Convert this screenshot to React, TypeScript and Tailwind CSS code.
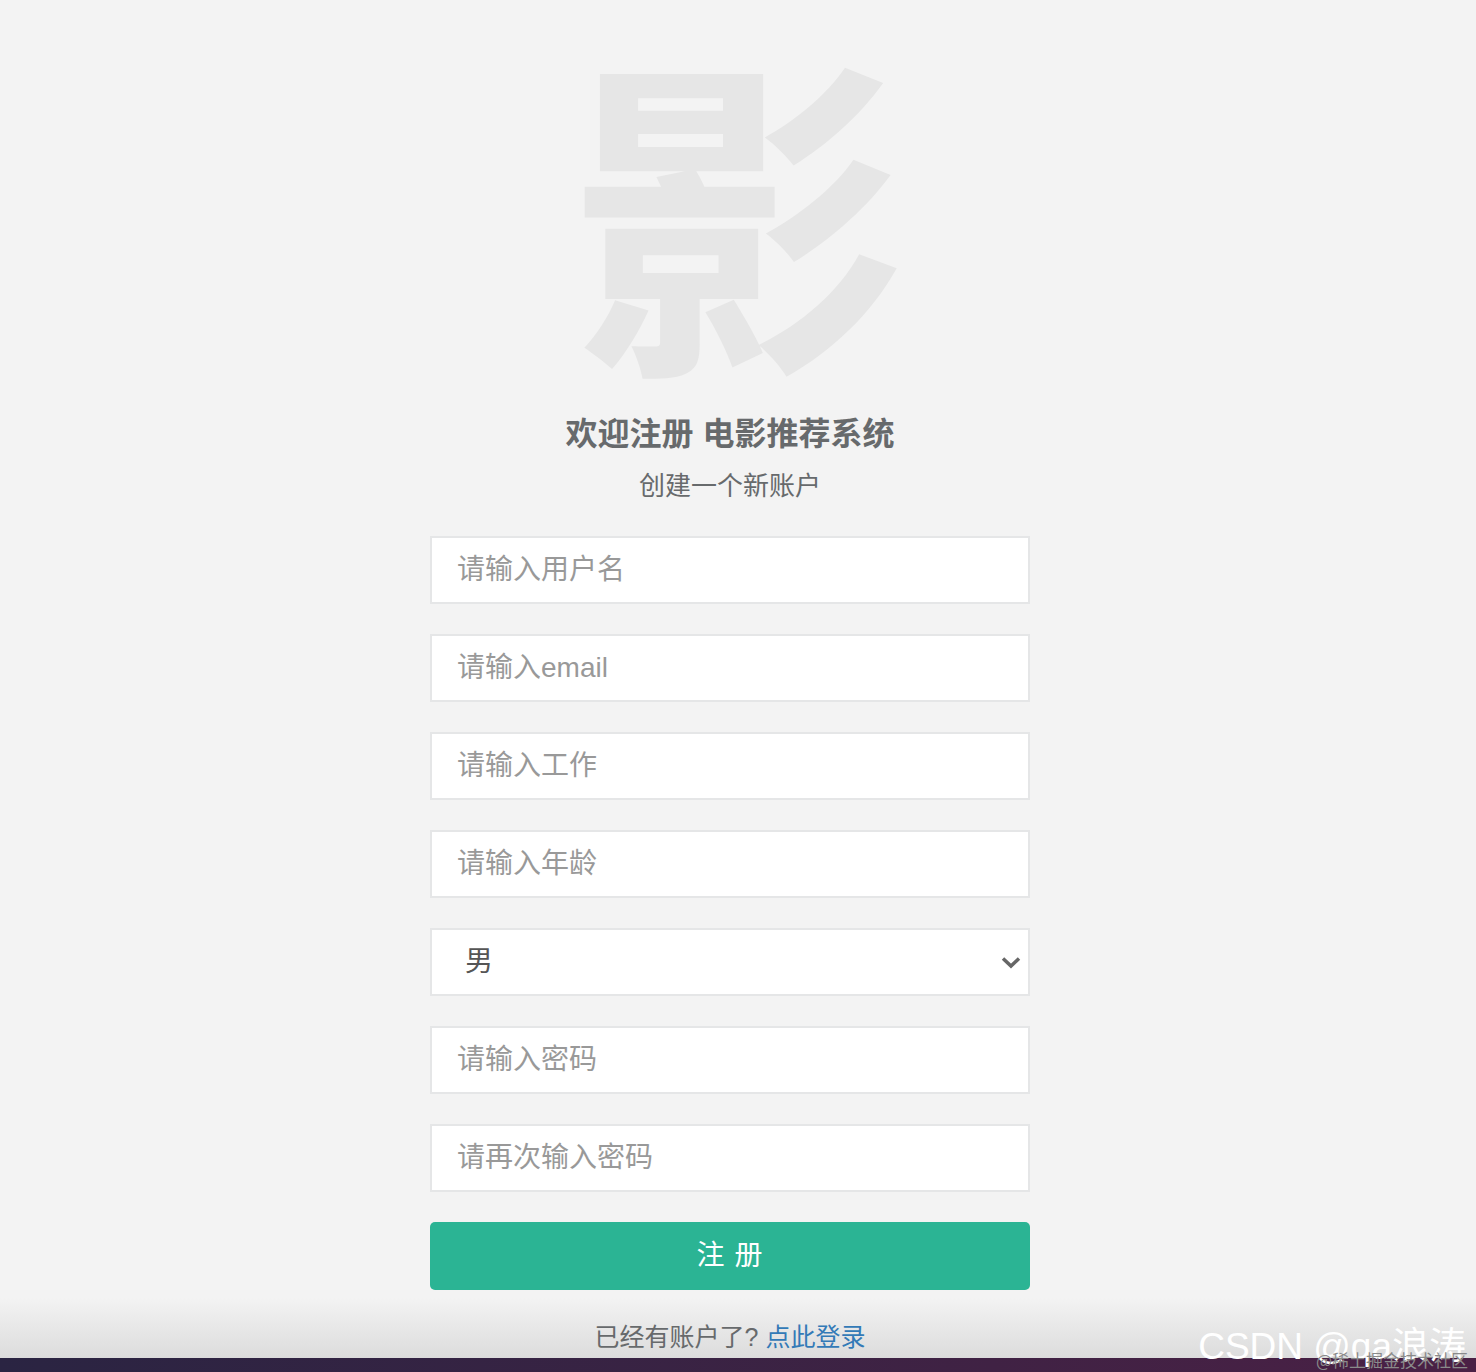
import React from "react";

const inputs = ["请输入用户名", "请输入email", "请输入工作", "请输入年龄"];
const inputs2 = ["请输入密码", "请再次输入密码"];

function Field({ ph }: { ph: string }) {
  return (
    <div className="flex h-[68px] w-full items-center border-2 border-[#e5e6e7] bg-white pl-[25px] text-[28px] text-[#999999]">
      {ph}
    </div>
  );
}

export default function App() {
  return (
    <div
      className="relative flex h-[1372px] w-full flex-col items-center overflow-hidden bg-[#f3f3f3] pr-[16px] text-[#676a6c]"
      style={{ fontFamily: '"Helvetica Neue", "Liberation Sans", "Noto Sans CJK SC", sans-serif' }}
    >
      <div
        className="ml-[17px] mt-[33px] h-[340px] text-[338px] font-bold leading-none text-[#e6e6e6]"
        style={{ fontFamily: '"Noto Sans CJK SC", sans-serif' }}
      >
        影
      </div>
      <h3 className="mt-[41px] text-[32px] font-bold leading-[40px] text-[#676a6c]">欢迎注册 电影推荐系统</h3>
      <p className="mt-[15px] text-[26px] leading-[34px] text-[#676a6c]">创建一个新账户</p>
      <div className="mt-[33px] flex w-[600px] flex-col gap-[30px]">
        {inputs.map((p) => (
          <Field key={p} ph={p} />
        ))}
        <div className="flex h-[68px] w-full items-center justify-between border-2 border-[#e5e6e7] bg-white pl-[33px] pr-[7px] text-[28px] text-[#555555]">
          <span>男</span>
          <svg width="20" height="14" viewBox="0 0 20 14" fill="none">
            <path d="M2 3.5 L10 11 L18 3.5" stroke="#666" strokeWidth="3.5" />
          </svg>
        </div>
        {inputs2.map((p) => (
          <Field key={p} ph={p} />
        ))}
        <button className="flex h-[68px] w-full items-center justify-center rounded-[5px] bg-[#2bb494] text-[28px] tracking-[1px] text-white">
          注 册
        </button>
      </div>
      <p className="relative z-10 mt-[30px] text-[25px] leading-[34px] text-[#676a6c]">
        已经有账户了? <span className="text-[#337ab7]">点此登录</span>
      </p>

      <div className="pointer-events-none absolute bottom-[14px] left-0 h-[60px] w-full bg-gradient-to-b from-[#f3f3f3]/0 to-[#dcdcdc]" />
      <div className="absolute bottom-0 left-0 h-[14px] w-full bg-gradient-to-r from-[#2a2442] to-[#4a2045]" />
      <div className="absolute bottom-[7px] right-[10px] text-[37px] leading-none text-white" style={{ fontFamily: '"Liberation Sans", "Noto Sans CJK SC", sans-serif' }}>
        CSDN @qa浪涛
      </div>
      <div className="absolute bottom-[4px] right-[8px] text-[17px] leading-none text-[#8a8a8a]" style={{ fontFamily: '"Noto Sans CJK SC", serif' }}>
        @稀土掘金技术社区
      </div>
    </div>
  );
}
